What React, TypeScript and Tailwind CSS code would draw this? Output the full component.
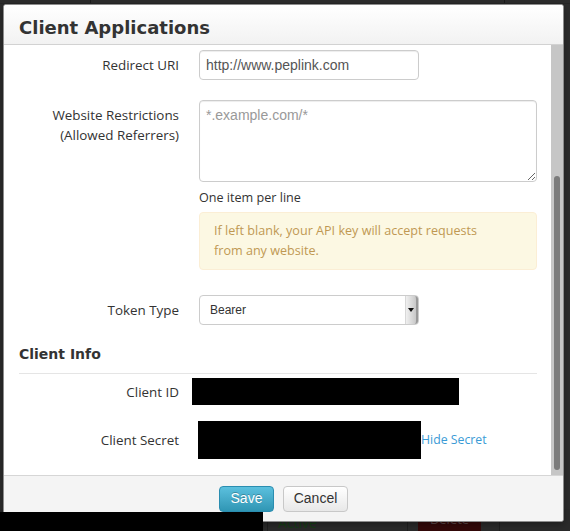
import React from "react";

const OPEN = "font-['Open_Sans',sans-serif]";
const ARIAL = "font-['Liberation_Sans',Arial,sans-serif]";
const DEJA = "font-['DejaVu_Sans',Verdana,sans-serif]";

function Label({ children }: { children: React.ReactNode }) {
  return (
    <div className={`w-[160px] shrink-0 text-right text-[13.4px] leading-[20px] text-[#333] ${OPEN}`}>
      {children}
    </div>
  );
}

export default function App() {
  return (
    <div className="relative w-[570px] h-[531px] overflow-hidden bg-[#2c2c2c]">
      {/* background page */}
      <div className="flex h-full flex-col">
        <div className="flex h-[4px] border-b border-[#262626]">
          <div className="w-[91px] border-r border-[#1a1a1a]" />
          <div className="w-[414px] border-r border-[#1a1a1a]" />
        </div>
        <div className="flex-1" />
        <div className="flex h-[22px] bg-[#2a2a2a]">
          <div className="w-[268px] border-r border-[#1f1f1f]" />
          <div className={`w-[140px] border-r border-[#1f1f1f] pl-[10px] pt-[4px] text-[14px] leading-[20px] text-[#173d16] ${OPEN}`}>
            Active
          </div>
          <div className="w-[92px] border-r border-[#1f1f1f] pl-[10px]">
            <div className={`flex h-[22px] w-[63px] items-center justify-center bg-[#330909] text-[13px] text-[#5a4646] ${OPEN}`}>
              Delete
            </div>
          </div>
        </div>
      </div>

      {/* modal */}
      <div className="absolute left-[3px] top-[4px] flex h-[518px] w-[561px] flex-col overflow-hidden rounded-[3px] border border-[#8c8c8c] bg-white shadow-[0_3px_7px_rgba(0,0,0,0.3)]">
        <div className="h-[40px] shrink-0 border-b border-[#d2d2d2] bg-gradient-to-b from-white to-[#f2f2f2] pl-[15px] pt-[11px]">
          <h3 className={`text-[18px] font-bold leading-[24px] text-[#333] ${DEJA}`}>Client Applications</h3>
        </div>

        <div className="flex min-h-0 flex-1">
          <div className="flex-1 overflow-hidden pl-[15px] pr-[14px]">
            {/* Redirect URI */}
            <div className="mt-[5px] flex gap-[20px]">
              <div className="pt-[5px]">
                <Label>Redirect URI</Label>
              </div>
              <div className={`flex h-[30px] w-[220px] items-center rounded-[4px] border border-[#cccccc] px-[6px] text-[14px] text-[#555] shadow-[inset_0_1px_1px_rgba(0,0,0,0.075)] ${ARIAL}`}>
                http://www.peplink.com
              </div>
            </div>

            {/* Website restrictions */}
            <div className="mt-[20px] flex gap-[20px]">
              <div className="pt-[5px]">
                <Label>
                  Website Restrictions
                  <br />
                  (Allowed Referrers)
                </Label>
              </div>
              <div className="flex flex-col">
                <textarea
                  placeholder="*.example.com/*"
                  className={`block h-[82px] w-[338px] resize-y rounded-[4px] border border-[#cccccc] px-[6px] py-[4px] text-[14px] leading-[20px] text-[#555] placeholder:text-[#999] shadow-[inset_0_1px_1px_rgba(0,0,0,0.075)] outline-none ${ARIAL}`}
                />
                <div className={`mt-[6px] text-[12.6px] leading-[20px] text-[#333] ${OPEN}`}>One item per line</div>
                <div className={`mt-[4px] w-[338px] rounded-[4px] border border-[#fbeed5] bg-[#fcf8e3] py-[8px] pl-[14px] pr-[35px] text-[12.6px] leading-[20px] text-[#c09853] ${OPEN}`}>
                  If left blank, your API key will accept requests from any website.
                </div>
              </div>
            </div>

            {/* Token type */}
            <div className="mt-[25px] flex gap-[20px]">
              <div className="pt-[5px]">
                <Label>Token Type</Label>
              </div>
              <div className="flex h-[30px] w-[220px] items-stretch rounded-[4px] border border-[#cccccc] bg-white">
                <div className={`flex flex-1 items-center pl-[10px] text-[12px] text-[#333] ${ARIAL}`}>Bearer</div>
                <div className="flex w-[13px] items-center justify-center rounded-r-[3px] border-l border-[#d8d8d8] bg-gradient-to-r from-[#f0f0f0] to-[#c8c8c8] border-r-2 border-r-[#9a9a9a]">
                  <svg width="6" height="4" viewBox="0 0 6 4">
                    <path d="M0 0 H6 L3 4 Z" fill="#111" />
                  </svg>
                </div>
              </div>
            </div>

            {/* Client info */}
            <div className={`mt-[19px] text-[14px] font-bold leading-[20px] text-[#333] ${DEJA}`}>Client Info</div>
            <div className="mt-[9px] h-px w-[518px] bg-[#e5e5e5]" />

            <div className="mt-[4px] flex items-center">
              <Label>Client ID</Label>
              <div className="ml-[13px] h-[27px] w-[267px] bg-black" />
            </div>

            <div className="mt-[16px] flex items-center">
              <Label>Client Secret</Label>
              <div className="ml-[19px] h-[38px] w-[223px] bg-black" />
              <span className={`text-[12.3px] leading-[20px] text-[#3a9bd6] ${OPEN}`}>Hide Secret</span>
            </div>
          </div>

          {/* scrollbar */}
          <div className="flex w-[12px] shrink-0 justify-center bg-[#c6c6c6]">
            <div className="mt-[131px] h-[294px] w-[6px] rounded-full bg-[#7b7b7b]" />
          </div>
        </div>

        <div className="flex h-[46px] shrink-0 justify-center gap-[9px] border-t border-[#d6d6d6] bg-[#f4f4f4] pt-[10px]">
          <button className={`h-[26px] w-[55px] rounded-[4px] border border-[#2a8db0] bg-gradient-to-b from-[#5bc0de] to-[#2f96b4] pb-[3px] text-[14px] leading-[20px] text-white [text-shadow:0_-1px_0_rgba(0,0,0,0.25)] ${ARIAL}`}>
            Save
          </button>
          <button className={`h-[26px] w-[65px] rounded-[4px] border border-[#c8c8c8] bg-gradient-to-b from-white to-[#e8e8e8] pb-[3px] text-[14px] leading-[20px] text-[#333] ${ARIAL}`}>
            Cancel
          </button>
        </div>
      </div>

      {/* redaction */}
      <div className="absolute left-0 top-[512px] h-[19px] w-[263px] bg-black" />
    </div>
  );
}
